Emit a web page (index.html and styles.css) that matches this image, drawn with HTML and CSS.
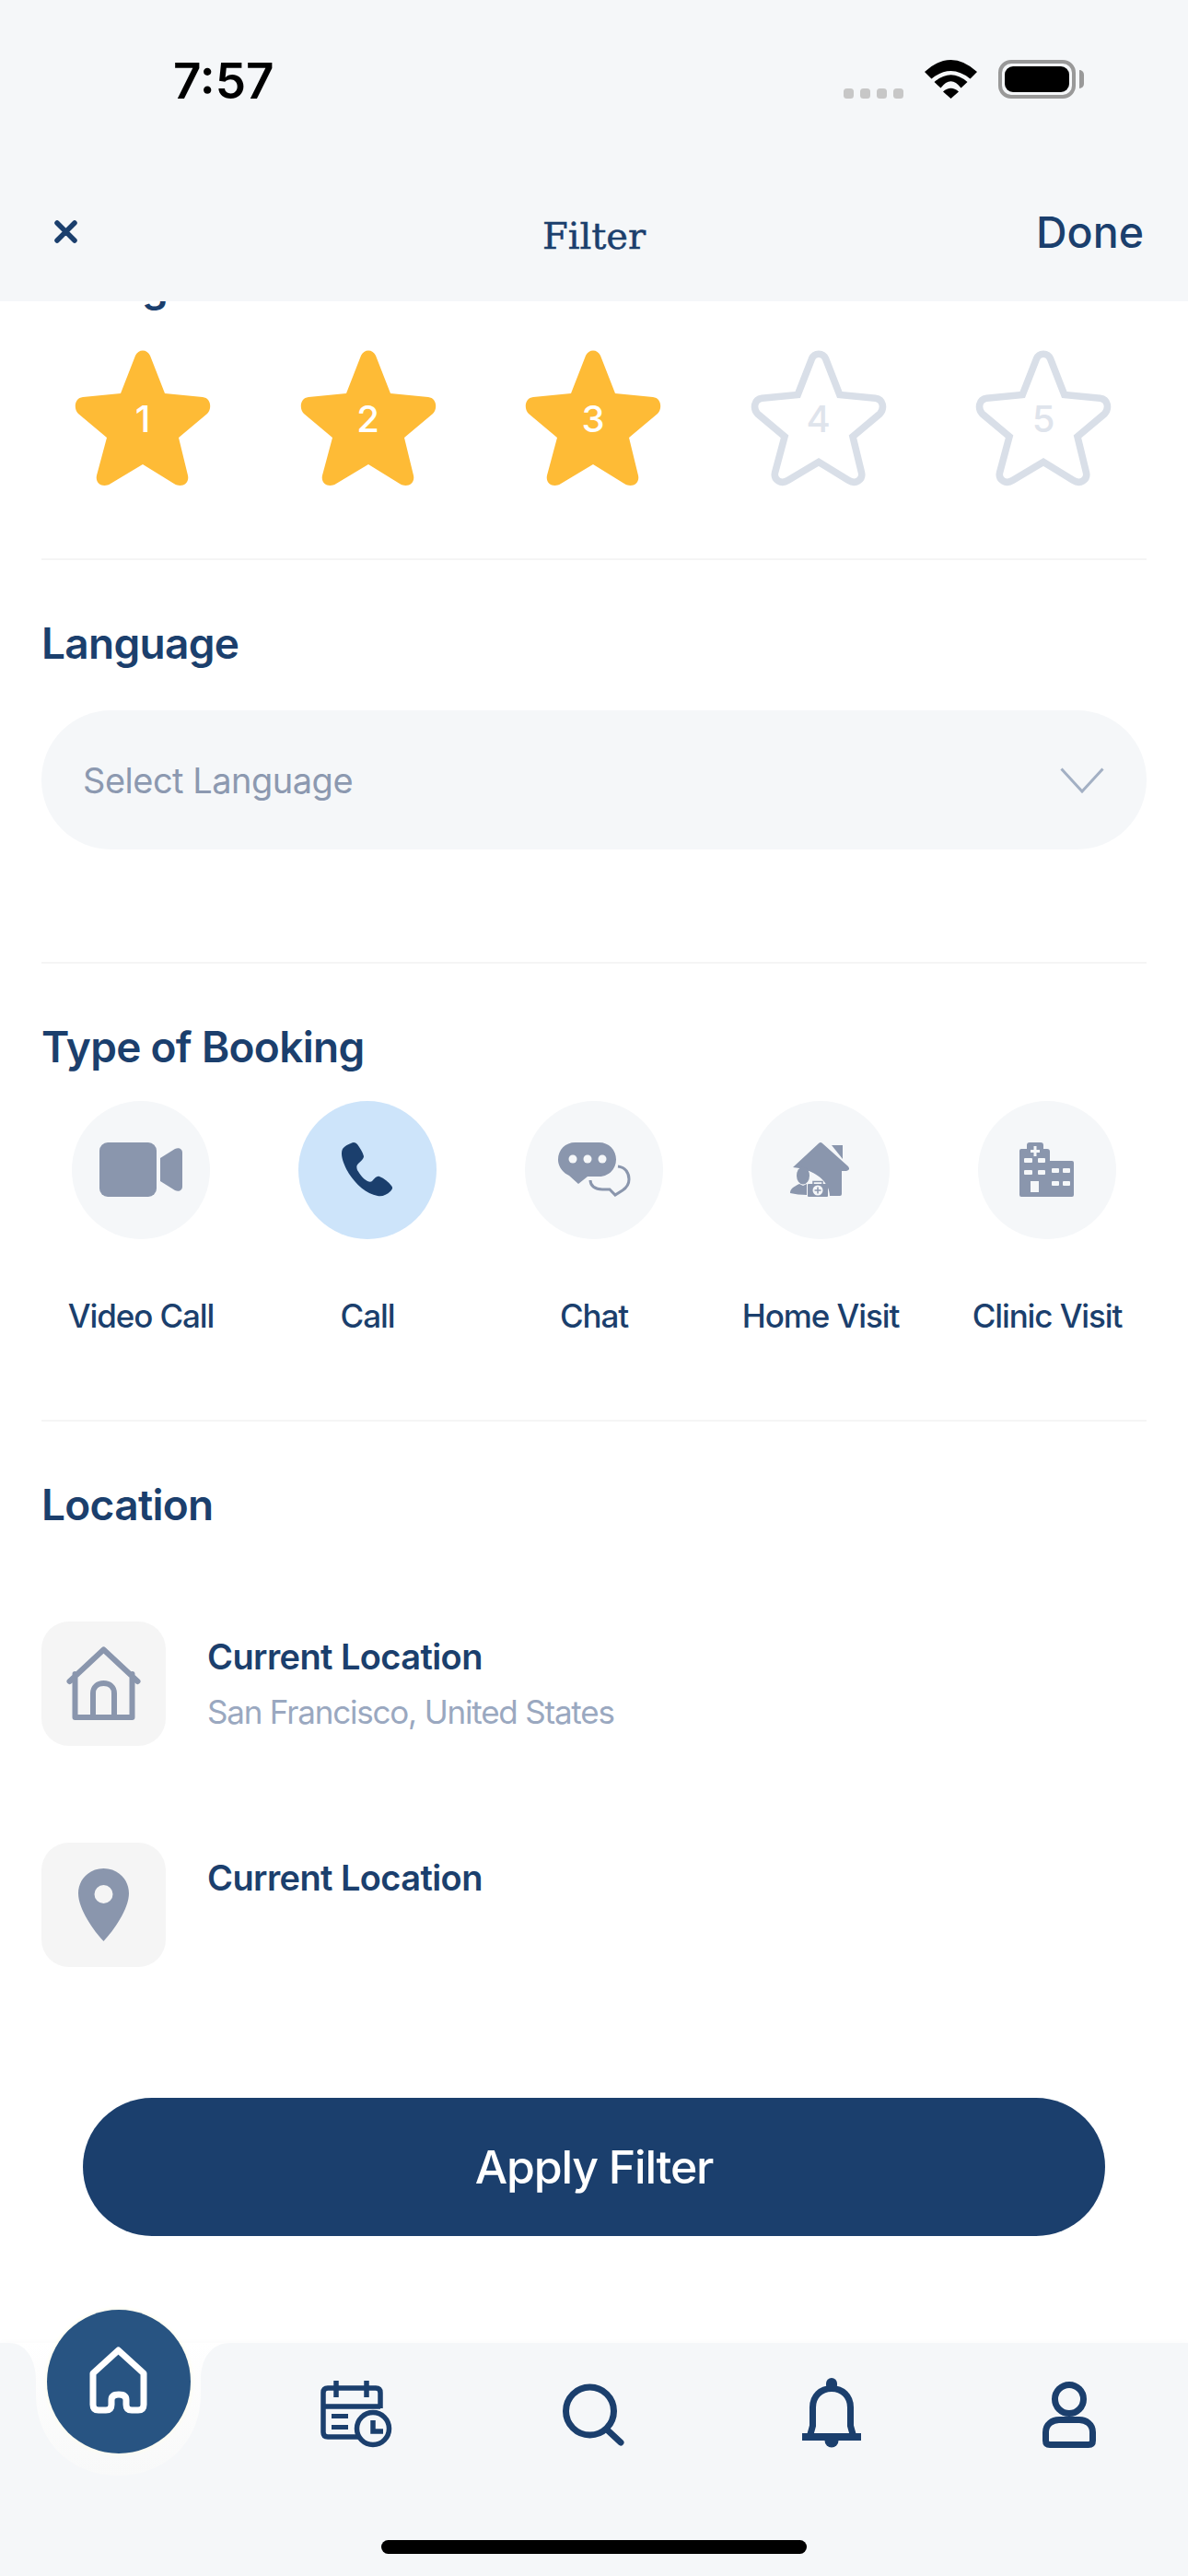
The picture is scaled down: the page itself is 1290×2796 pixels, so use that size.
FILE: index.html
```
<!DOCTYPE html>
<html lang="en">
<head>
<meta charset="utf-8">
<title>Filter</title>
<link rel="stylesheet" href="styles.css">
</head>
<body>
<svg class="defs" width="0" height="0" aria-hidden="true"><defs>
<path id="star" d="M65 5C68 -2.500 78 -2.500 81 5L97 46L138 50C147 51 148.500 62 143 68L112 94L122 135C124 144 115 149 107 144L73 123L38 144C30 149 21 144 23 135L34 94L3 68C-2.500 62 -1 51 8 50L49 46Z"/>
</defs></svg>
<div class="phone">
  <header class="top">
    <div class="status">
      <span class="time">7:57</span>
      <div class="status-icons">
        <div class="signal"><i></i><i></i><i></i><i></i></div>
        <svg class="wifi" width="57" height="42" viewBox="0 0 57 42"><path d="M0 13Q28.500 -13 57 13L49.500 20.500Q28.500 3.500 7.500 20.500Z"/><path d="M10.500 24Q28.500 8.500 46.500 24L39.500 30.500Q28.500 16 17.500 30.500Z"/><path d="M20 34.500Q28.500 27 37 34.500L28.500 42Z"/></svg>
        <div class="battery"><span class="battery-fill"></span></div>
        <span class="battery-nub"></span>
      </div>
    </div>
    <div class="navbar">
      <svg class="close" width="25" height="25" viewBox="0 0 25 25"><path d="M3 3L22 22M22 3L3 22"/></svg>
      <span class="title">Filter</span>
      <span class="done">Done</span>
    </div>
  </header>

  <main class="content">
    <section class="rating">
      <h2 class="heading">Rating</h2>
      <div class="stars">
        <div class="star"><svg viewBox="0 0 146 146"><use href="#star" class="star-on"/></svg><span class="star-num">1</span></div>
        <div class="star"><svg viewBox="0 0 146 146"><use href="#star" class="star-on"/></svg><span class="star-num">2</span></div>
        <div class="star"><svg viewBox="0 0 146 146"><use href="#star" class="star-on"/></svg><span class="star-num">3</span></div>
        <div class="star"><svg viewBox="-4 -4 154 154"><use href="#star" class="star-off"/></svg><span class="star-num off">4</span></div>
        <div class="star"><svg viewBox="-4 -4 154 154"><use href="#star" class="star-off"/></svg><span class="star-num off">5</span></div>
      </div>
    </section>

    <section class="language">
      <h2 class="heading">Language</h2>
      <div class="select">
        <span>Select Language</span>
        <svg class="chevron" width="48" height="28" viewBox="0 0 48 28"><path d="M1.500 1.500L24 26L46.500 1.500"/></svg>
      </div>
    </section>

    <section class="booking">
      <h2 class="heading">Type of Booking</h2>
      <div class="types">
        <div class="type">
          <div class="circle"><svg width="150" height="150" viewBox="0 0 150 150"><rect class="g" x="30" y="45" width="62" height="59" rx="9"/><path class="g" d="M96 62L112 52C116 50 120 52 120 56V93C120 97 116 99 112 97L96 87Z"/></svg></div>
          <span class="type-label">Video Call</span>
        </div>
        <div class="type">
          <div class="circle active"><svg width="150" height="150" viewBox="0 0 150 150"><path class="n" d="M57 46C60 44 62 45 64 47C67 51 70 56 71 60C71 63 68 65 65 68C63 70 63 72 64 75C67 80 71 85 75 87C77 88 79 88 80 87C83 84 85 81 88 82C93 84 98 88 101 92C103 94 102 96 100 98C96 102 91 104 86 103C74 101 62 90 55 79C49 69 45 58 48 52C50 49 54 47 57 46Z"/></svg></div>
          <span class="type-label">Call</span>
        </div>
        <div class="type">
          <div class="circle"><svg width="150" height="150" viewBox="0 0 150 150"><path class="g" d="M54.500 45H80.500C91 45 99 53 99 63.500C99 74 91 82 80.500 82H68L58 90L48 81C41 78 36 71 36 63.500C36 53 44 45 54.500 45Z"/><circle class="h" cx="52" cy="63" r="4.500"/><circle class="h" cx="68" cy="63" r="4.500"/><circle class="h" cx="84" cy="63" r="4.500"/><path class="ol" d="M101 71C109 72 113 78 113 85C113 92 109 95 106 97L98 102L92 96H84C76 96 71 92 71 86"/></svg></div>
          <span class="type-label">Chat</span>
        </div>
        <div class="type">
          <div class="circle"><svg width="150" height="150" viewBox="0 0 150 150"><path class="g" d="M73 46Q75 44 77 46L105 71Q108 75 103 76H98V101Q98 103 96 103H85C85 88 69 74 45 72Z"/><path class="g" d="M87 48H99V63Z"/><ellipse class="g" cx="56" cy="81" rx="7" ry="9.500"/><path class="g" d="M42 100C42 95 46 93 52 90L56 92L60 90V102Q50 102 42 100Z"/><rect class="g" x="61" y="90" width="22" height="14" rx="1"/><path class="ol-thin" d="M67 90V87.500H77V90"/><circle class="h" cx="72" cy="97" r="5.500"/><path class="ol-thin" d="M72 93.500V100.500M68.500 97H75.500"/></svg></div>
          <span class="type-label">Home Visit</span>
        </div>
        <div class="type">
          <div class="circle"><svg width="150" height="150" viewBox="0 0 150 150"><path class="g" d="M47 52H53V48Q53 45 56 45H68Q71 45 71 48V52H75Q78 52 78 55V65H102Q104 65 104 67V102Q104 104 102 104H47Q45 104 45 102V54Q45 52 47 52Z"/><path class="cross" d="M62 49V60M57 54.500H67"/><rect class="h" x="50" y="62" width="9" height="5" rx="1"/><rect class="h" x="65" y="62" width="8" height="5" rx="1"/><rect class="h" x="50" y="75" width="9" height="5" rx="1"/><rect class="h" x="65" y="75" width="8" height="5" rx="1"/><rect class="h" x="80" y="73" width="8" height="5" rx="1"/><rect class="h" x="92" y="73" width="8" height="5" rx="1"/><rect class="h" x="80" y="87" width="8" height="5" rx="1"/><rect class="h" x="92" y="87" width="8" height="5" rx="1"/><rect class="h" x="57" y="87" width="9" height="12"/></svg></div>
          <span class="type-label">Clinic Visit</span>
        </div>
      </div>
    </section>

    <section class="location">
      <h2 class="heading">Location</h2>
      <div class="places">
        <div class="place">
          <div class="tile"><svg width="135" height="135" viewBox="0 0 135 135"><path class="line" d="M30.500 65L67.500 30.500L104.500 65M36.500 57V104H98.500V57M56 104V78C56 71 61 67 67.500 67C74 67 79 71 79 78V104"/></svg></div>
          <div class="place-text">
            <span class="place-title">Current Location</span>
            <span class="place-sub">San Francisco, United States</span>
          </div>
        </div>
        <div class="place">
          <div class="tile"><svg width="135" height="135" viewBox="0 0 135 135"><path class="g" fill-rule="evenodd" d="M67.500 28C83 28 95 40 95 55C95 72 78 96 67.500 107C57 96 40 72 40 55C40 40 52 28 67.500 28ZM67.500 46A10 10 0 1 0 67.500 66A10 10 0 1 0 67.500 46Z"/></svg></div>
          <div class="place-text">
            <span class="place-title">Current Location</span>
          </div>
        </div>
      </div>
    </section>

    <button class="apply" type="button">Apply Filter</button>
  </main>

  <footer class="tabbar">
    <svg class="notch" width="260" height="146" viewBox="0 0 260 146"><defs><linearGradient id="halo" x1="0" y1="0" x2="0" y2="1"><stop offset="0" stop-color="#ffffff"/><stop offset="1" stop-color="#f8f9f9"/></linearGradient></defs><path fill="url(#halo)" d="M10 0C28 0 39 18 39 40V55C39 110 80 144 128.500 144C177 144 218 110 218 55V40C218 18 229 0 250 0Z"/></svg>
    <div class="fab"><svg width="64" height="74" viewBox="0 0 64 74"><path class="fab-line" d="M4 29L31.500 4L59 29V63Q59 69 53 69H46Q40 69 40 63V58Q40 52 32 52Q24 52 24 58V63Q24 69 18 69H10Q4 69 4 63Z"/></svg></div>
    <nav class="tabs">
      <div class="tab"></div>
      <div class="tab"><svg width="78" height="74" viewBox="0 0 78 74"><path class="nav" d="M45 61H8Q3 61 3 56V13Q3 8 8 8H60Q65 8 65 13V30M3 28H65M17 0V18M50 0V18"/><path class="nav-fill" d="M12 36H30V41H12ZM12 48H30V53H12Z"/><circle class="nav nav-mask" cx="57" cy="52" r="17.500"/><path class="nav" d="M57 43V55H68"/></svg></div>
      <div class="tab"><svg width="68" height="68" viewBox="0 0 68 68"><circle class="nav wide" cx="29.500" cy="30" r="26"/><path class="nav wide round" d="M49 51L63 64"/></svg></div>
      <div class="tab"><svg width="64" height="80" viewBox="0 0 64 80"><path class="nav wide" d="M9 61L11.500 52V32C11.500 20 20 11.500 32 11.500C44 11.500 52.500 20 52.500 32V52L55 61"/><rect class="nav-fill" x="0" y="60" width="64" height="8"/><rect class="nav-fill" x="26" y="0" width="12" height="14" rx="6"/><path class="nav-fill" d="M24.500 68H39.500A7.500 7.500 0 1 1 24.500 68Z"/></svg></div>
      <div class="tab"><svg width="58" height="72" viewBox="0 0 58 72"><circle class="nav wide" cx="29" cy="19" r="15.500"/><path class="nav wide" d="M3.500 55C3.500 46 11 41.500 18 41.500H40C47 41.500 54.500 46 54.500 55V64Q54.500 68.500 50 68.500H8Q3.500 68.500 3.500 64Z"/></svg></div>
    </nav>
    <div class="home-bar"></div>
  </footer>
</div>
</body>
</html>
```

FILE: styles.css
```
* { box-sizing: border-box; }
html, body { margin: 0; padding: 0; background: #fff; }
body { font-family: Inter, "Noto Sans", sans-serif; color: #1b3f6d; }
.defs { position: absolute; }
.phone { width: 1290px; height: 2796px; display: flex; flex-direction: column; overflow: hidden; }

/* header */
.top { height: 327px; flex: none; background: #f5f7f9; position: relative; z-index: 2; }
.status { height: 108px; padding: 65px 113px 0 188px; display: flex; justify-content: space-between; }
.time { font-size: 53px; font-weight: 600; line-height: 46px; color: #000; }
.status-icons { display: flex; align-items: flex-start; }
.signal { display: flex; gap: 7px; margin-top: 31px; margin-right: 23px; }
.signal i { width: 11px; height: 11px; border-radius: 3.5px; background: #c7c7c7; }
.wifi { fill: #000; margin-right: 23px; }
.battery { width: 84px; height: 42px; border: 4px solid #999; border-radius: 14px; padding: 3px; }
.battery-fill { display: block; height: 100%; background: #000; border-radius: 9px; }
.battery-nub { width: 5px; height: 20px; margin: 11px 0 0 4px; background: #999; border-radius: 0 5px 5px 0; }
.navbar { position: relative; height: 219px; padding: 116px 48px 0 59px; display: flex; justify-content: space-between; align-items: flex-start; }
.close { margin-top: 15px; }
.close path { stroke: #1b3f6d; stroke-width: 5.5; stroke-linecap: round; fill: none; }
.title { position: absolute; left: 0; right: 0; top: 124px; text-align: center; font-family: "DejaVu Serif", "Liberation Serif", serif; font-size: 40px; line-height: 48px; -webkit-text-stroke: 0.5px #1b3f6d; }
.done { font-size: 46.5px; font-weight: 500; line-height: 56px; }

/* content */
.content { flex: 1; min-height: 0; overflow: hidden; background: #fff; }
.heading { margin: 0; font-size: 46px; line-height: 52px; font-weight: 600; color: #1b3f6d; letter-spacing: -0.7px; }
.rating, .language, .booking, .location { margin: 0 45px; }
.rating { margin-top: -43px; padding-bottom: 79px; border-bottom: 2px solid #f5f5f5; }
.stars { display: flex; justify-content: space-between; margin: 45px 39px 0 37px; }
.star { position: relative; width: 146px; height: 146px; }
.star svg { display: block; width: 146px; height: 146px; overflow: visible; }
.star-on { fill: #febb36; }
.star-off { fill: #fff; stroke: #d9dfe8; stroke-width: 8; }
.star-num { position: absolute; left: 0; right: 0; top: 50px; text-align: center; font-size: 40px; line-height: 48px; font-weight: 500; color: #fff; }
.star-num.off { color: #dfe4ec; }

.language { padding-top: 64px; padding-bottom: 122px; border-bottom: 2px solid #f5f5f5; }
.select { margin-top: 47px; height: 151px; border-radius: 76px; background: #f5f7f9; display: flex; align-items: center; justify-content: space-between; padding: 0 46px 0 45px; font-size: 38px; letter-spacing: -0.5px; color: #8c99b0; }
.chevron path { fill: none; stroke: #a3b0c4; stroke-width: 3; }

.booking { padding-top: 64px; padding-bottom: 91px; border-bottom: 2px solid #f5f5f5; }
.types { display: grid; grid-template-columns: repeat(5, 246px); margin: 33px -15px 0; }
.type { display: flex; flex-direction: column; align-items: center; }
.circle { width: 150px; height: 150px; border-radius: 50%; background: #f5f7f9; }
.circle svg { display: block; }
.circle.active { background: #cde4fa; }
.type-label { margin-top: 61px; font-size: 35px; line-height: 44px; font-weight: 500; letter-spacing: -1.1px; white-space: nowrap; }
.g { fill: #8a96ad; }
.n { fill: #1b3f6d; }
.h { fill: #f5f7f9; }
.ol { fill: none; stroke: #8a96ad; stroke-width: 3; }
.ol-thin { fill: none; stroke: #8a96ad; stroke-width: 1.500; }
.cross { fill: none; stroke: #f5f7f9; stroke-width: 3; }

.location { padding-top: 64px; }
.places { margin-top: 101px; display: flex; flex-direction: column; gap: 105px; }
.place { display: flex; gap: 45px; align-items: flex-start; }
.tile { width: 135px; height: 135px; border-radius: 30px; background: #f5f5f5; flex: none; }
.tile svg { display: block; }
.line { fill: none; stroke: #8a96ad; stroke-width: 6; stroke-linecap: round; stroke-linejoin: round; }
.place-text { display: flex; flex-direction: column; padding-top: 15px; gap: 15px; }
.place-title { font-size: 38px; line-height: 46px; font-weight: 600; letter-spacing: -0.6px; }
.place-sub { font-size: 35px; line-height: 44px; letter-spacing: -1.2px; color: #9aa8c0; }

.apply { display: block; width: 1110px; height: 150px; margin: 142px 0 0 90px; border: 0; border-radius: 75px; background: #1b3f6d; color: #fff; font-family: inherit; font-size: 50px; font-weight: 500; letter-spacing: -1.2px; }

/* tab bar */
.tabbar { position: relative; height: 253px; flex: none; background: #f5f7f9; display: flex; flex-direction: column; box-shadow: 0 -3px 6px rgba(0, 0, 0, 0.012); }
.notch { position: absolute; left: 0; top: 0; }
.fab { position: absolute; left: 51px; top: -36px; width: 156px; height: 156px; border-radius: 50%; background: #285482; box-shadow: 0 0 4px 1px #fffdea; display: flex; align-items: center; justify-content: center; }
.fab svg { margin-top: -2px; }
.fab-line { fill: none; stroke: #fff; stroke-width: 7; stroke-linejoin: round; }
.tabs { display: grid; grid-template-columns: repeat(5, 258px); margin-top: 38px; height: 80px; }
.tab { display: flex; align-items: center; justify-content: center; }
.nav { fill: none; stroke: #1b3f6d; stroke-width: 5.5; }
.nav.wide { stroke-width: 7; }
.nav.round { stroke-linecap: round; }
.nav-mask { fill: #f5f7f9; stroke-width: 5.5; }
.nav-fill { fill: #1b3f6d; }
.home-bar { width: 462px; height: 15px; border-radius: 8px; background: #000; margin: 96px auto 0; }
```
